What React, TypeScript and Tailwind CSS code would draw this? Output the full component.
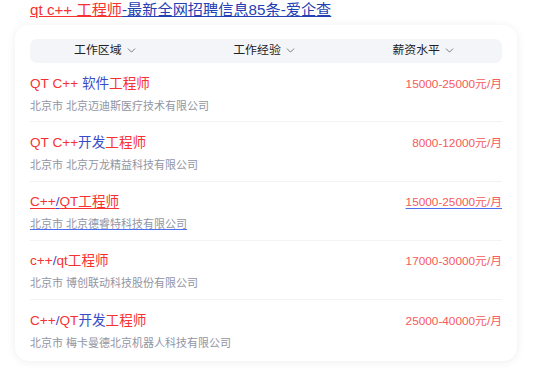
import { ChevronDown } from 'lucide-react';

type Part = { c: 'r' | 'b'; t: string };
type Job = { title: Part[]; company: string; salary: string; hover?: boolean };

const FONT = { fontFamily: '"Liberation Sans", Arial, "Noto Sans CJK SC", sans-serif' };

const JOBS: Job[] = [
  {
    title: [{ c: 'r', t: 'QT C++ ' }, { c: 'b', t: '软件' }, { c: 'r', t: '工程师' }],
    company: '北京市 北京迈迪斯医疗技术有限公司',
    salary: '15000-25000元/月',
  },
  {
    title: [{ c: 'r', t: 'QT C++' }, { c: 'b', t: '开发' }, { c: 'r', t: '工程师' }],
    company: '北京市 北京万龙精益科技有限公司',
    salary: '8000-12000元/月',
  },
  {
    title: [{ c: 'r', t: 'C++' }, { c: 'b', t: '/' }, { c: 'r', t: 'QT工程师' }],
    company: '北京市 北京德睿特科技有限公司',
    salary: '15000-25000元/月',
    hover: true,
  },
  {
    title: [{ c: 'r', t: 'c++' }, { c: 'b', t: '/' }, { c: 'r', t: 'qt工程师' }],
    company: '北京市 博创联动科技股份有限公司',
    salary: '17000-30000元/月',
  },
  {
    title: [{ c: 'r', t: 'C++' }, { c: 'b', t: '/' }, { c: 'r', t: 'QT' }, { c: 'b', t: '开发' }, { c: 'r', t: '工程师' }],
    company: '北京市 梅卡曼德北京机器人科技有限公司',
    salary: '25000-40000元/月',
  },
];

const FILTERS = ['工作区域', '工作经验', '薪资水平'];

function JobRow({ job, last }: { job: Job; last: boolean }) {
  return (
    <div className={`h-[59.3px] pt-[11.5px] ${last ? '' : 'border-b border-[#f2f3f5]'}`}>
      <div className="flex items-baseline justify-between leading-[17px]">
        <span className="text-[13.6px]">
          {job.title.map((p, i) => (
            <span
              key={i}
              className={`${p.c === 'r' ? 'text-[#f73131]' : 'text-[#3a4bc8]'} ${job.hover ? 'underline underline-offset-2' : ''}`}
            >
              {p.t}
            </span>
          ))}
        </span>
        <span
          className={`text-[11.8px] text-[#f65a5a] ${job.hover ? 'underline decoration-[#4e6ef2] underline-offset-2' : ''}`}
        >
          {job.salary}
        </span>
      </div>
      <div
        className={`mt-[6px] text-[11px] leading-[14px] text-[#9195a3] ${job.hover ? 'underline decoration-[#4e6ef2] underline-offset-1' : ''}`}
      >
        {job.company}
      </div>
    </div>
  );
}

export default function App() {
  return (
    <div className="w-[554px] h-[370px] bg-white overflow-hidden" style={FONT}>
      <div className="pl-[30px] h-[25px] text-[15.2px] leading-[20px]">
        <span className="text-[#f73131] underline decoration-[#f73131]">qt c++ 工程师</span>
        <span className="text-[#2440b3] underline decoration-[#2440b3]">-最新全网招聘信息85条-爱企查</span>
      </div>

      <div className="ml-[15px] w-[502px] rounded-[14px] bg-white shadow-[0_1px_10px_rgba(0,0,0,0.07)] px-[15px] pt-[14px] pb-[2px]">
        {/* filter bar */}
        <div className="h-[24px] rounded-[7px] bg-[#f4f5f9] flex items-center justify-between pl-[44px] pr-[46px]">
          {FILTERS.map((f) => (
            <div key={f} className="flex items-center gap-[3px] text-[11.9px] text-[#222]">
              <span>{f}</span>
              <ChevronDown className="w-[13px] h-[13px] text-[#555]" strokeWidth={1.4} />
            </div>
          ))}
        </div>

        {JOBS.map((job, i) => (
          <JobRow key={i} job={job} last={i === JOBS.length - 1} />
        ))}
      </div>
    </div>
  );
}
